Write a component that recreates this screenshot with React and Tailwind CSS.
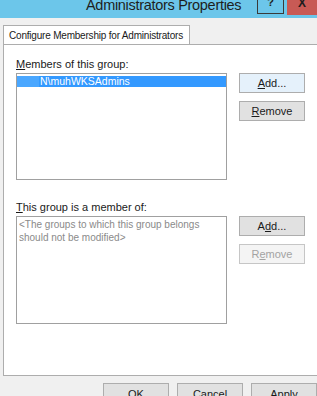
import React from 'react'

const Btn = ({ children, className = '', disabled }) => (
  <div
    className={
      'flex items-center justify-center h-[20px] w-[66px] border ' +
      (disabled
        ? 'bg-[#f4f4f4] border-[#c6c6c6] text-[#a3a3a3] '
        : 'bg-[#e1e1e1] border-[#adadad] text-[#1a1a1a] ') +
      className
    }
  >
    {children}
  </div>
)

const App = () => {
  return (
    <div
      className="w-[317px] h-[396px] bg-[#f0f0f0] overflow-hidden text-[11px] text-[#1a1a1a]"
      style={{ fontFamily: '"Liberation Sans", Arial, sans-serif' }}
    >
      {/* title bar */}
      <div className="h-[18px] bg-[#6cc6ea] flex items-start overflow-hidden">
        <div className="flex-1 min-w-0 pl-[86px] -mt-[6px] text-[14.5px] tracking-[-0.3px] text-[#1e1e1e] leading-[22px] whitespace-nowrap">
          Administrators Properties
        </div>
        <div className="w-[27px] h-[14px] border border-[#3a3a3a] border-t-0 flex items-start justify-center font-bold text-[11px] leading-[4px] text-[#222]">
          ?
        </div>
        <div className="ml-[3px] w-[30px] h-[15px] bg-[#c85a55] flex items-start justify-center font-bold text-[#1d1d1d] text-[12px] leading-[6px]">
          X
        </div>
      </div>

      {/* tab strip */}
      <div className="pl-[3px] mt-[7px] flex">
        <div className="w-[187px] h-[19px] bg-white border border-[#adadad] border-b-0 px-[5px] flex items-center whitespace-nowrap text-[10px] tracking-[-0.2px]">
          Configure Membership for Administrators
        </div>
      </div>

      {/* tab panel */}
      <div className="ml-[3px] w-[330px] h-[332px] bg-white border border-[#adadad] pl-[12px] pt-[12px]">
        <div className="leading-[14px]">
          <span className="underline">M</span>embers of this group:
        </div>
        <div className="flex mt-[2px]">
          <div className="w-[211px] h-[107px] border border-[#a0a0a0] bg-white pt-[2px]">
            <div className="h-[11px] bg-[#3399ff] flex items-center text-white leading-[11px] text-[10.5px]">
              <span className="w-[22px] h-[11px] bg-[#4aa7ff]" />
              <span className="ml-px">N\muhWKSAdmins</span>
            </div>
          </div>
          <div className="ml-[12px] flex flex-col gap-[8px]">
            <Btn className="border-[#6fa8dc] bg-[#e5f1fb]">
              <span><span className="underline">A</span>dd...</span>
            </Btn>
            <Btn>
              <span><span className="underline">R</span>emove</span>
            </Btn>
          </div>
        </div>

        <div className="mt-[20px] leading-[14px]">
          <span className="underline">T</span>his group is a member of:
        </div>
        <div className="flex mt-[2px]">
          <div className="w-[211px] h-[108px] border border-[#a0a0a0] bg-white px-[2px] pt-[1px] text-[#8a8a8a] leading-[13px] text-[10px]">
            &lt;The groups to which this group belongs
            <br />
            should not be modified&gt;
          </div>
          <div className="ml-[12px] flex flex-col gap-[8px]">
            <Btn>
              <span>A<span className="underline">d</span>d...</span>
            </Btn>
            <Btn disabled>
              <span>R<span className="underline">e</span>move</span>
            </Btn>
          </div>
        </div>
      </div>

      {/* dialog buttons */}
      <div className="flex mt-[7px] pl-[103px] gap-[8px]">
        <div className="w-[67px] h-[22px] bg-[#e1e1e1] border border-[#adadad] flex items-center justify-center">OK</div>
        <div className="w-[67px] h-[22px] bg-[#e1e1e1] border border-[#adadad] flex items-center justify-center">Cancel</div>
        <div className="w-[67px] h-[22px] bg-[#e1e1e1] border border-[#adadad] flex items-center justify-center">Apply</div>
      </div>
    </div>
  )
}

export default App
